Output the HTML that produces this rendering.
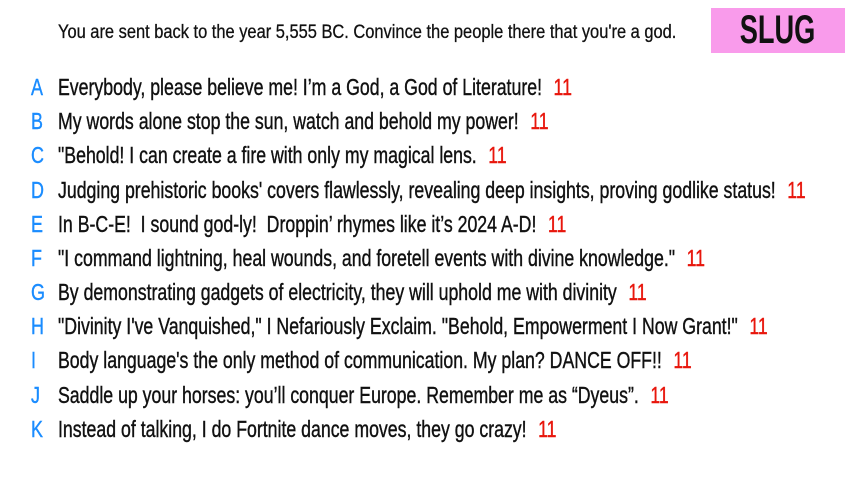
<!DOCTYPE html>
<html><head><meta charset="utf-8"><style>
body{margin:0;width:853px;height:480px;background:#fff;overflow:hidden;font-family:"Liberation Sans",sans-serif;color:#111;position:relative}
.q{position:absolute;left:58px;top:22px;font-size:19px;white-space:nowrap;transform:scaleX(.865);transform-origin:left center;-webkit-text-stroke:.3px #111}
.slug{position:absolute;left:711px;top:8px;width:134px;height:45px;background:#f99beb;font-size:40px;font-weight:bold;text-align:center;line-height:45px;color:#111}
.slug span{display:inline-block;transform:scaleX(.68)}
.r{position:absolute;left:0;height:30px;line-height:30px;font-size:23px;white-space:nowrap;-webkit-text-stroke:.4px}
.l{position:absolute;left:31px;color:#1a8cff;display:inline-block;transform:scaleX(.78);transform-origin:left center}
.t{position:absolute;left:58px;transform:scaleX(.77);transform-origin:left center}
.n{color:#e8160c;margin-left:15px}
</style></head><body>
<div class="q">You are sent back to the year 5,555 BC. Convince the people there that you're a god.</div>
<div class="slug"><span>SLUG</span></div>
<div class="r" style="top:72px"><span class="l">A</span><span class="t">Everybody, please believe me! I’m a God, a God of Literature!<span class="n">11</span></span></div>
<div class="r" style="top:106px"><span class="l">B</span><span class="t">My words alone stop the sun, watch and behold my power!<span class="n">11</span></span></div>
<div class="r" style="top:140px"><span class="l">C</span><span class="t">"Behold! I can create a fire with only my magical lens.<span class="n">11</span></span></div>
<div class="r" style="top:175px"><span class="l">D</span><span class="t">Judging prehistoric books' covers flawlessly, revealing deep insights, proving godlike status!<span class="n">11</span></span></div>
<div class="r" style="top:209px"><span class="l">E</span><span class="t">In B-C-E!&nbsp; I sound god-ly!&nbsp; Droppin’ rhymes like it’s 2024 A-D!<span class="n">11</span></span></div>
<div class="r" style="top:243px"><span class="l">F</span><span class="t">"I command lightning, heal wounds, and foretell events with divine knowledge."<span class="n">11</span></span></div>
<div class="r" style="top:277px"><span class="l">G</span><span class="t">By demonstrating gadgets of electricity, they will uphold me with divinity<span class="n">11</span></span></div>
<div class="r" style="top:311px"><span class="l">H</span><span class="t">"Divinity I've Vanquished," I Nefariously Exclaim. "Behold, Empowerment I Now Grant!"<span class="n">11</span></span></div>
<div class="r" style="top:345px"><span class="l">I</span><span class="t">Body language's the only method of communication. My plan? DANCE OFF!!<span class="n">11</span></span></div>
<div class="r" style="top:380px"><span class="l">J</span><span class="t">Saddle up your horses: you’ll conquer Europe. Remember me as “Dyeus”.<span class="n">11</span></span></div>
<div class="r" style="top:414px"><span class="l">K</span><span class="t">Instead of talking, I do Fortnite dance moves, they go crazy!<span class="n">11</span></span></div>
</body></html>
